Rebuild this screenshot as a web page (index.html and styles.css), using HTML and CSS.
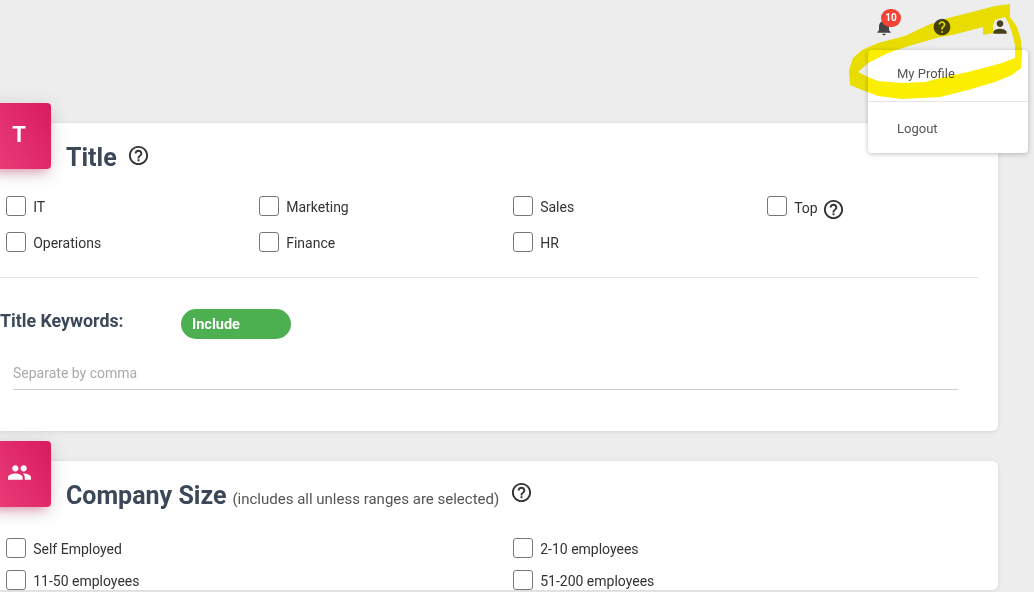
FILE: index.html
```html
<!DOCTYPE html>
<html lang="en">
<head>
<meta charset="utf-8">
<title>Search filters</title>
<link rel="stylesheet" href="styles.css">
</head>
<body>
<div class="page">
  <header class="topbar">
    <span class="top-icon">
      <svg viewBox="0 0 24 24"><path d="M12 22c1.1 0 2-.9 2-2h-4c0 1.1.9 2 2 2zm6-6v-5c0-3.07-1.63-5.64-4.5-6.32V4c0-.83-.67-1.5-1.5-1.5s-1.5.67-1.5 1.5v.68C7.64 5.36 6 7.92 6 11v5l-2 2v1h16v-1l-2-2z"/></svg>
      <span class="badge">10</span>
    </span>
    <span class="top-icon">
      <svg viewBox="0 0 24 24"><path d="M12 2C6.48 2 2 6.48 2 12s4.48 10 10 10 10-4.48 10-10S17.52 2 12 2zm1 17h-2v-2h2v2zm2.07-7.75l-.9.92C13.45 12.9 13 13.5 13 15h-2v-.5c0-1.1.45-2.1 1.17-2.83l1.24-1.26c.37-.36.59-.86.59-1.41 0-1.1-.9-2-2-2s-2 .9-2 2H8c0-2.21 1.79-4 4-4s4 1.79 4 4c0 .88-.36 1.68-.93 2.25z"/></svg>
    </span>
    <span class="top-icon top-icon-user">
      <svg viewBox="0 0 24 24"><path d="M12 12c2.21 0 4-1.79 4-4s-1.79-4-4-4-4 1.79-4 4 1.79 4 4 4zm0 2c-2.67 0-8 1.34-8 4v2h16v-2c0-2.66-5.33-4-8-4z"/></svg>
    </span>
  </header>

  <main class="cards">
    <section class="card card-title">
      <div class="card-badge"><span class="badge-letter">T</span></div>
      <div class="card-head">
        <h2 class="card-heading">Title</h2>
        <svg class="help help-head" viewBox="0 0 24 24"><path d="M11 18h2v-2h-2v2zm1-16C6.48 2 2 6.48 2 12s4.48 10 10 10 10-4.48 10-10S17.52 2 12 2zm0 18c-4.41 0-8-3.59-8-8s3.59-8 8-8 8 3.59 8 8-3.59 8-8 8zm0-14c-2.21 0-4 1.79-4 4h2c0-1.1.9-2 2-2s2 .9 2 2c0 2-3 1.75-3 5h2c0-2.25 3-2.5 3-5 0-2.21-1.79-4-4-4z"/></svg>
      </div>
      <div class="checks checks-four">
        <label class="check"><span class="box"></span>IT</label>
        <label class="check"><span class="box"></span>Marketing</label>
        <label class="check"><span class="box"></span>Sales</label>
        <label class="check"><span class="box"></span><span class="top-label">Top</span>
          <svg class="help help-top" viewBox="0 0 24 24"><path d="M11 18h2v-2h-2v2zm1-16C6.48 2 2 6.48 2 12s4.48 10 10 10 10-4.48 10-10S17.52 2 12 2zm0 18c-4.41 0-8-3.59-8-8s3.59-8 8-8 8 3.59 8 8-3.59 8-8 8zm0-14c-2.21 0-4 1.79-4 4h2c0-1.1.9-2 2-2s2 .9 2 2c0 2-3 1.75-3 5h2c0-2.25 3-2.5 3-5 0-2.21-1.79-4-4-4z"/></svg>
        </label>
        <label class="check"><span class="box"></span>Operations</label>
        <label class="check"><span class="box"></span>Finance</label>
        <label class="check"><span class="box"></span>HR</label>
      </div>
      <hr class="divider">
      <div class="keywords">
        <span class="keywords-label">Title Keywords:</span>
        <span class="toggle">Include</span>
      </div>
      <div class="keyword-input">Separate by comma</div>
    </section>

    <section class="card card-size">
      <div class="card-badge">
        <svg class="badge-icon" viewBox="0 0 24 24"><path d="M16 11c1.66 0 2.99-1.34 2.99-3S17.66 5 16 5c-1.66 0-3 1.34-3 3s1.34 3 3 3zm-8 0c1.66 0 2.99-1.34 2.99-3S9.66 5 8 5C6.34 5 5 6.34 5 8s1.34 3 3 3zm0 2c-2.33 0-7 1.17-7 3.5V19h14v-2.5c0-2.33-4.67-3.5-7-3.5zm8 0c-.29 0-.62.02-.97.05 1.16.84 1.97 1.97 1.97 3.45V19h6v-2.5c0-2.33-4.67-3.5-7-3.5z"/></svg>
      </div>
      <div class="card-head">
        <h2 class="card-heading">Company Size</h2>
        <span class="card-note">(includes all unless ranges are selected)</span>
        <svg class="help help-size" viewBox="0 0 24 24"><path d="M11 18h2v-2h-2v2zm1-16C6.48 2 2 6.48 2 12s4.48 10 10 10 10-4.48 10-10S17.52 2 12 2zm0 18c-4.41 0-8-3.59-8-8s3.59-8 8-8 8 3.59 8 8-3.59 8-8 8zm0-14c-2.21 0-4 1.79-4 4h2c0-1.1.9-2 2-2s2 .9 2 2c0 2-3 1.75-3 5h2c0-2.25 3-2.5 3-5 0-2.21-1.79-4-4-4z"/></svg>
      </div>
      <div class="checks checks-two">
        <label class="check"><span class="box"></span>Self Employed</label>
        <label class="check"><span class="box"></span>2-10 employees</label>
        <label class="check"><span class="box"></span>11-50 employees</label>
        <label class="check"><span class="box"></span>51-200 employees</label>
      </div>
    </section>
  </main>

  <nav class="menu">
    <div class="menu-item">My Profile</div>
    <div class="menu-item menu-item-last">Logout</div>
  </nav>

  <svg class="highlight" viewBox="0 0 1034 592">
    <path fill-rule="evenodd" d="M1010 4 L995 6 L968 13 L948 18 L928 25 L905 36 L878 43 L862 50 L853 58 L849 70 L850 85 L862 90 L878 96 L902 99 L940 97 L968 90 L995 82 L1012 75 L1021 68 L1022 53 L1021 40 L1017 27 L1010 17 Z M983 35 L993 33 L993 26 L995 20 L1005 17 L1009 24 L1012 33 L1015 45 L1015 58 L1002 63 L968 72 L940 78 L925 82 L902 83 L878 81 L868 77 L858 72 L868 63 L888 53 L912 45 L940 37 L952 35 L968 31 L983 27 Z"/>
  </svg>
</div>
</body>
</html>
```

FILE: styles.css
```css
* {
  box-sizing: border-box;
}

html,
body {
  margin: 0;
  height: 100%;
}

body {
  font-family: Roboto, "Liberation Sans", sans-serif;
  color: #333;
  background: #ededed;
}

.page {
  position: relative;
  width: 1034px;
  height: 592px;
  overflow: hidden;
}

.topbar {
  display: flex;
  justify-content: flex-end;
  gap: 38px;
  height: 123px;
  padding: 17px 24px 0 0;
}

.top-icon {
  position: relative;
  width: 20px;
  height: 20px;
}

.top-icon svg {
  display: block;
  width: 20px;
  height: 20px;
  fill: #444;
}

.top-icon-user svg {
  fill: #45431c;
}

.badge {
  position: absolute;
  left: 7px;
  top: -8px;
  width: 20px;
  height: 18px;
  border-radius: 9px;
  background: #f44336;
  color: #fff;
  font-size: 10px;
  font-weight: 700;
  line-height: 18px;
  text-align: center;
}

.cards {
  display: flex;
  flex-direction: column;
  gap: 30px;
  width: 1018px;
  margin-left: -20px;
}

.card {
  position: relative;
  padding: 0 20px 0 26px;
  border-radius: 6px;
  background: #fff;
  box-shadow: 0 1px 4px rgba(0, 0, 0, 0.1);
}

.card-title {
  height: 308px;
  padding-top: 17px;
}

.card-size {
  padding-top: 17px;
}

.card-badge {
  position: absolute;
  left: 6px;
  top: -20px;
  display: flex;
  align-items: center;
  justify-content: center;
  width: 65px;
  height: 66px;
  padding-left: 1px;
  border-radius: 4px;
  background: linear-gradient(60deg, #ec407a, #d81b60);
  box-shadow: 0 4px 20px rgba(0, 0, 0, 0.14), 0 7px 10px -5px rgba(233, 30, 99, 0.4);
}

.badge-letter {
  margin-bottom: 4px;
  color: #fff;
  font-size: 22px;
  font-weight: 700;
}

.badge-icon {
  width: 25px;
  height: 25px;
  margin-bottom: 4px;
  fill: #fff;
}

.card-head {
  display: flex;
  align-items: center;
  height: 34px;
  padding-left: 60px;
}

.card-heading {
  margin: 2px 0 0;
  color: #3c4858;
  font-size: 25px;
  font-weight: 700;
  line-height: 34px;
}

.card-note {
  margin-left: 6px;
  padding-top: 7px;
  color: #555;
  font-size: 15px;
}

.help {
  flex: none;
  width: 23px;
  height: 23px;
  fill: #333;
}

.help-head {
  margin: -4px 0 0 10px;
}

.help-size {
  margin: -6px 0 0 11px;
}

.checks {
  display: grid;
  margin-top: 22px;
}

.checks-four {
  grid-template-columns: 253px 254px 254px 254px;
  row-gap: 16px;
}

.checks-two {
  grid-template-columns: repeat(2, 507px);
  row-gap: 12px;
  margin-top: 26px;
}

.check {
  display: flex;
  align-items: flex-start;
  height: 20px;
  color: #333;
  font-size: 14px;
  line-height: 22px;
}

.box {
  flex: none;
  width: 20px;
  height: 20px;
  margin-right: 7.2px;
  border: 1px solid #777;
  border-radius: 3px;
  background: #fff;
}

.top-label {
  margin: 1px 0 0 0;
}

.help-top {
  margin: 2px 0 0 4px;
}

.divider {
  height: 1px;
  margin: 25px 0 0 -26px;
  border: 0;
  background: #e4e4e4;
}

.keywords {
  display: flex;
  margin: 31px 0 0 -6px;
}

.keywords-label {
  width: 181px;
  color: #3c4858;
  font-size: 17.8px;
  font-weight: 700;
  line-height: 24px;
}

.toggle {
  width: 110px;
  height: 30px;
  padding-left: 11px;
  border-radius: 15px;
  background: #4caf50;
  color: #fff;
  font-size: 14.5px;
  font-weight: 700;
  line-height: 31px;
}

.keyword-input {
  height: 33px;
  margin: 18px 20px 0 7px;
  border-bottom: 1px solid #ccc;
  color: #aaa;
  font-size: 14px;
  line-height: 16px;
  padding-top: 8px;
}

.menu {
  position: absolute;
  left: 868px;
  top: 50px;
  width: 160px;
  height: 103px;
  border-radius: 4px;
  background: #fff;
  box-shadow: 0 1px 5px rgba(0, 0, 0, 0.25);
}

.menu-item {
  height: 52px;
  padding-left: 29px;
  border-bottom: 1px solid #e4e4e4;
  color: #555;
  font-size: 13px;
  line-height: 47px;
}

.menu-item-last {
  height: 51px;
  border-bottom: 0;
  line-height: 54px;
}

.highlight {
  position: absolute;
  left: 0;
  top: 0;
  width: 1034px;
  height: 592px;
  fill: #fbee00;
  mix-blend-mode: multiply;
  pointer-events: none;
}
```
